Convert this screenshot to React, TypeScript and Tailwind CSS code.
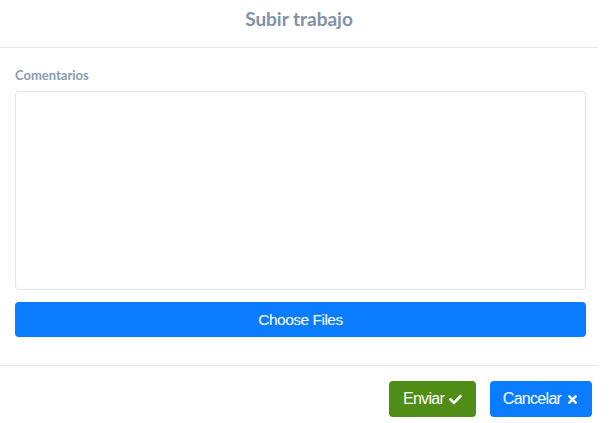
import { FaCheck, FaTimes } from "react-icons/fa"

export default function App() {
  return (
    <div className="w-[614px] h-[423px] bg-white overflow-hidden">
      <div className="w-[598px]">
        {/* header */}
        <div className="h-[48px] border-b border-[#e5e7eb] flex items-center justify-center">
          <h1 className="font-['Lato',sans-serif] font-bold text-[19px] text-[#8092a8] mt-[-8px]">Subir trabajo</h1>
        </div>

        {/* body */}
        <div className="px-[15px] pt-[19px] pb-[28px]">
          <p className="font-['Lato',sans-serif] font-bold text-[13px] text-[#8b9bb0] leading-[17px] mb-[7px]">Comentarios</p>
          <textarea className="block w-[571px] h-[199px] border border-[#dfe5ec] rounded-[4px] resize-none outline-none" />
          <button className="mt-[12px] w-[571px] h-[35px] rounded-[4px] bg-[#0a7cff] text-white text-[15.5px] tracking-[-0.5px] font-['Liberation_Sans',Arial,sans-serif]">
            Choose Files
          </button>
        </div>

        {/* footer */}
        <div className="border-t border-[#e5e7eb] h-[58px] flex items-start justify-end gap-[14px] pt-[15px] pr-[6px]">
          <button className="w-[87px] h-[36px] rounded-[4px] bg-[#4f8d17] text-white text-[16px] tracking-[-0.7px] font-['Liberation_Sans',Arial,sans-serif] flex items-center justify-center gap-[5px]">
            Enviar <FaCheck className="text-[13px]" />
          </button>
          <button className="w-[102px] h-[36px] rounded-[4px] bg-[#0a7cff] text-white text-[16px] tracking-[-0.7px] font-['Liberation_Sans',Arial,sans-serif] flex items-center justify-center gap-[5px]">
            Cancelar <FaTimes className="text-[13px]" />
          </button>
        </div>
      </div>
    </div>
  )
}
